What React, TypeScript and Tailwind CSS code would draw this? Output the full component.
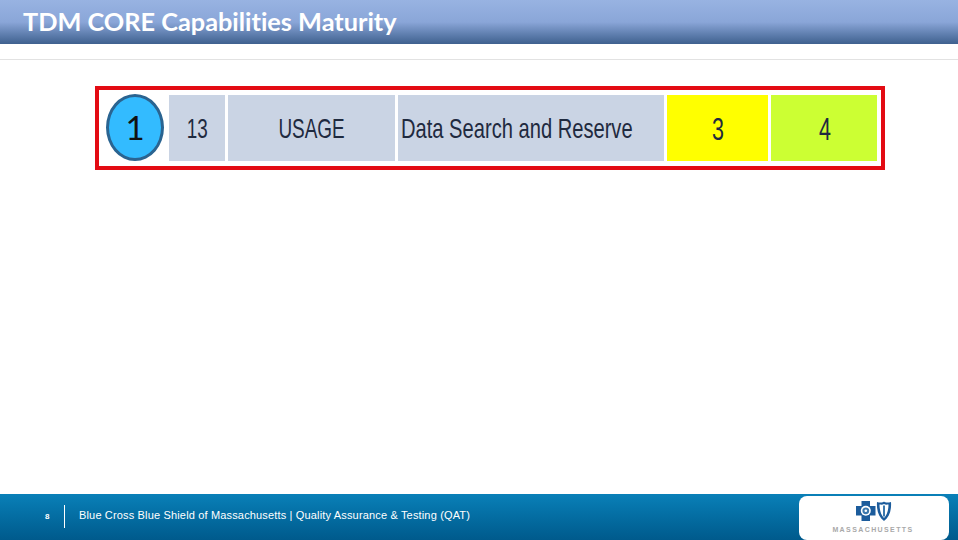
import React from 'react';

const cellText = "font-['Liberation_Sans',Arial,sans-serif] text-[#1f2a3f] scale-y-[1.25] scale-x-[0.86] whitespace-nowrap";

function BlueLogo() {
  return (
    <svg width="36" height="20" viewBox="0 0 36 20">
      {/* cross */}
      <path d="M5.500 0h8.500v5h5.500v9.500H14V20H5.500v-5.500H0V5h5.500z" fill="#1c5c9c" />
      <circle cx="9.800" cy="9.800" r="5" fill="#ffffff" />
      <circle cx="9.800" cy="9.800" r="3.400" fill="#3b78ae" />
      <circle cx="9.800" cy="9.800" r="1.300" fill="#ffffff" />
      {/* shield */}
      <path d="M21 1c3 .8 6 .8 7-.5 1 1.300 4 1.300 7 .5 .6 8-1.500 15-7 19-5.500-4-7.600-11-7-19z" fill="#1c5c9c" />
      <path d="M23.500 3.500c2 .3 3.500 .2 4.500-.6 1 .8 2.500 .9 4.500 .6 0 5.500-1.500 10.500-4.500 13.500-3-3-4.500-8-4.500-13.500z" fill="#ffffff" />
      <path d="M28 4.500v11" stroke="#3b78ae" strokeWidth="2" />
    </svg>
  );
}

export default function App() {
  return (
    <div className="w-[958px] h-[540px] bg-white flex flex-col overflow-hidden">
      {/* title bar */}
      <div className="h-[44px] shrink-0 pl-[23px] bg-gradient-to-b from-[#98b3e2] via-[#8aa6d8] to-[#3f618f]">
        <h1 className="font-['Lato',sans-serif] text-[25.300px] leading-[43px] font-bold text-white whitespace-nowrap [font-variant-ligatures:none]">
          TDM CORE Capabilities Maturity
        </h1>
      </div>
      <div className="h-px mt-[15px] shrink-0 bg-[#e2e2e2]" />

      {/* capability row */}
      <div className="flex-1 pt-[26px] pl-[95px]">
        <div className="w-[790px] h-[84px] border-4 border-[#e30b13] pt-[5px] pl-[7px] flex items-start">
          <div className="w-[58px] h-[67px] -mt-[1px] rounded-[50%] bg-[#33bbff] border-[3px] border-[#2a6491] flex items-center justify-center font-['Lato',sans-serif] text-[33px] text-[#111]">
            1
          </div>
          <div className="ml-[5px] flex gap-[3px] h-[66px] text-[22px]">
            <div className="w-[56px] bg-[#cad4e4] flex items-center justify-center"><span className={cellText}>13</span></div>
            <div className="w-[167px] bg-[#cad4e4] flex items-center justify-center"><span className={cellText}>USAGE</span></div>
            <div className="w-[266px] bg-[#cad4e4] flex items-center pl-[3px]"><span className={`${cellText} origin-left !scale-x-[0.915]`}>Data Search and Reserve</span></div>
            <div className="w-[101px] bg-[#ffff00] flex items-center justify-center pt-[4px] pl-[1px] text-[25px]"><span className={cellText}>3</span></div>
            <div className="w-[106px] bg-[#ccff33] flex items-center justify-center pt-[4px] pl-[2px] text-[25px]"><span className={cellText}>4</span></div>
          </div>
        </div>
      </div>

      {/* footer */}
      <div className="h-[46px] shrink-0 bg-gradient-to-b from-[#0a80b8] to-[#005a8c] flex items-center relative">
        <span className="ml-[45px] w-[19px] text-[8px] font-bold text-white font-['Liberation_Sans',sans-serif]">8</span>
        <div className="w-px h-[23px] mb-[1px] bg-white" />
        <span className="ml-[14px] mb-[4px] text-[11px] tracking-[0.16px] text-white font-['Liberation_Sans',sans-serif] whitespace-nowrap">
          Blue Cross Blue Shield of Massachusetts | Quality Assurance &amp; Testing (QAT)
        </span>
        <div className="absolute left-[799px] top-[2px] w-[150px] h-[44px] bg-white rounded-[8px] flex flex-col items-center pt-[5px]">
          <BlueLogo />
          <span className="mt-[4px] mr-[2px] text-[7px] font-bold tracking-[1.4px] text-[#a9a9a9] font-['Liberation_Sans',sans-serif]">MASSACHUSETTS</span>
        </div>
      </div>
    </div>
  );
}
